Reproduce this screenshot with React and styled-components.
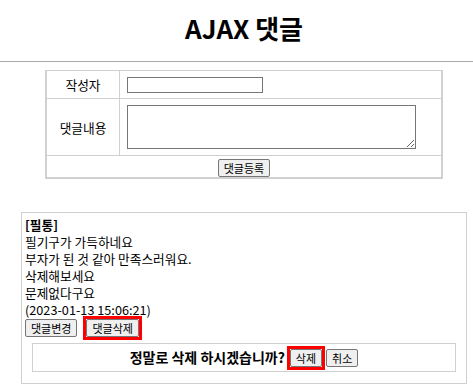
import React from 'react';
import styled, { createGlobalStyle } from 'styled-components';

const GlobalStyle = createGlobalStyle`
  body {
    margin: 0;
    background: #fff;
    color: #000;
    font-family: "Noto Sans CJK KR", "Noto Sans", sans-serif;
    font-size: 12.7px;
  }
`;

const Header = styled.header`
  height: 61px;
  padding-left: 15px;
  border-bottom: 1px solid #aaa;
  text-align: center;
`;

const Title = styled.h1`
  margin: 0;
  padding-top: 9px;
  font-size: 26px;
  line-height: 38px;
  font-weight: 700;
`;

const Main = styled.main`
  padding-left: 15px;
`;

const FormTable = styled.table`
  width: 398px;
  margin: 8px auto 0;
  border-collapse: collapse;
  border: 2px solid #d0d0d0;
  border-top-width: 1px;
`;

const Label = styled.th`
  width: 72px;
  border: 1px solid #d0d0d0;
  font-weight: 400;
  text-align: center;
  padding: 0;
  height: ${(p) => p.$h}px;
`;

const Field = styled.td`
  border: 1px solid #d0d0d0;
  padding: 0 7px;
  height: ${(p) => p.$h}px;
`;

const Footer = styled.td`
  border: 1px solid #d0d0d0;
  text-align: center;
  padding: 0;
  height: 21px;
`;

const TextInput = styled.input`
  display: block;
  box-sizing: border-box;
  width: 136px;
  height: 16px;
  margin: 0;
  border: 1px solid #767676;
  padding: 0 2px;
`;

const TextArea = styled.textarea`
  display: block;
  box-sizing: border-box;
  width: 289px;
  height: 44px;
  margin: 0;
  border: 1px solid #767676;
`;

const Button = styled.button`
  box-sizing: border-box;
  height: 18px;
  padding: 0 5px;
  margin: 0;
  margin-left: ${(p) => p.$ml || 0}px;
  border: 1px solid #767676;
  border-radius: 2px;
  background: #efefef;
  color: #000;
  font-family: "Noto Sans CJK KR", sans-serif;
  font-size: 11px;
  line-height: 16px;
  vertical-align: middle;
`;

/* red highlight box drawn around a button */
const Mark = styled.span`
  display: inline-flex;
  border: 3px solid #f00;
  margin-left: ${(p) => p.$ml || 0}px;
`;

const CommentBox = styled.div`
  box-sizing: border-box;
  width: 446px;
  margin: 33px auto 0;
  border: 1px solid #d0d0d0;
  padding: 3px 3px 11px;
  line-height: 17px;
`;

const Author = styled.div`
  font-weight: 700;
`;

const Actions = styled.div`
  display: flex;
  align-items: center;
  margin-top: 1px;
  height: 18px;
`;

const Confirm = styled.div`
  box-sizing: border-box;
  height: 29px;
  margin: 6px 7px 0;
  border: 1px solid #d0d0d0;
  display: flex;
  align-items: center;
  justify-content: center;
`;

const Question = styled.span`
  font-weight: 700;
  font-size: 14px;
  margin-right: 2px;
`;

export default function App() {
  return (
    <>
      <GlobalStyle />
      <Header>
        <Title>AJAX 댓글</Title>
      </Header>
      <Main>
        <FormTable>
          <tbody>
            <tr>
              <Label $h={27}>작성자</Label>
              <Field $h={27}>
                <TextInput type="text" />
              </Field>
            </tr>
            <tr>
              <Label $h={56}>댓글내용</Label>
              <Field $h={56}>
                <TextArea />
              </Field>
            </tr>
            <tr>
              <Footer colSpan={2}>
                <Button>댓글등록</Button>
              </Footer>
            </tr>
          </tbody>
        </FormTable>
        <CommentBox>
          <Author>[필통]</Author>
          <div>필기구가 가득하네요</div>
          <div>부자가 된 것 같아 만족스러워요.</div>
          <div>삭제해보세요</div>
          <div>문제없다구요</div>
          <div>(2023-01-13 15:06:21)</div>
          <Actions>
            <Button>댓글변경</Button>
            <Mark $ml={6}>
              <Button>댓글삭제</Button>
            </Mark>
          </Actions>
          <Confirm>
            <Question>정말로 삭제 하시겠습니까?</Question>
            <Mark>
              <Button>삭제</Button>
            </Mark>
            <Button $ml={1}>취소</Button>
          </Confirm>
        </CommentBox>
      </Main>
    </>
  );
}
